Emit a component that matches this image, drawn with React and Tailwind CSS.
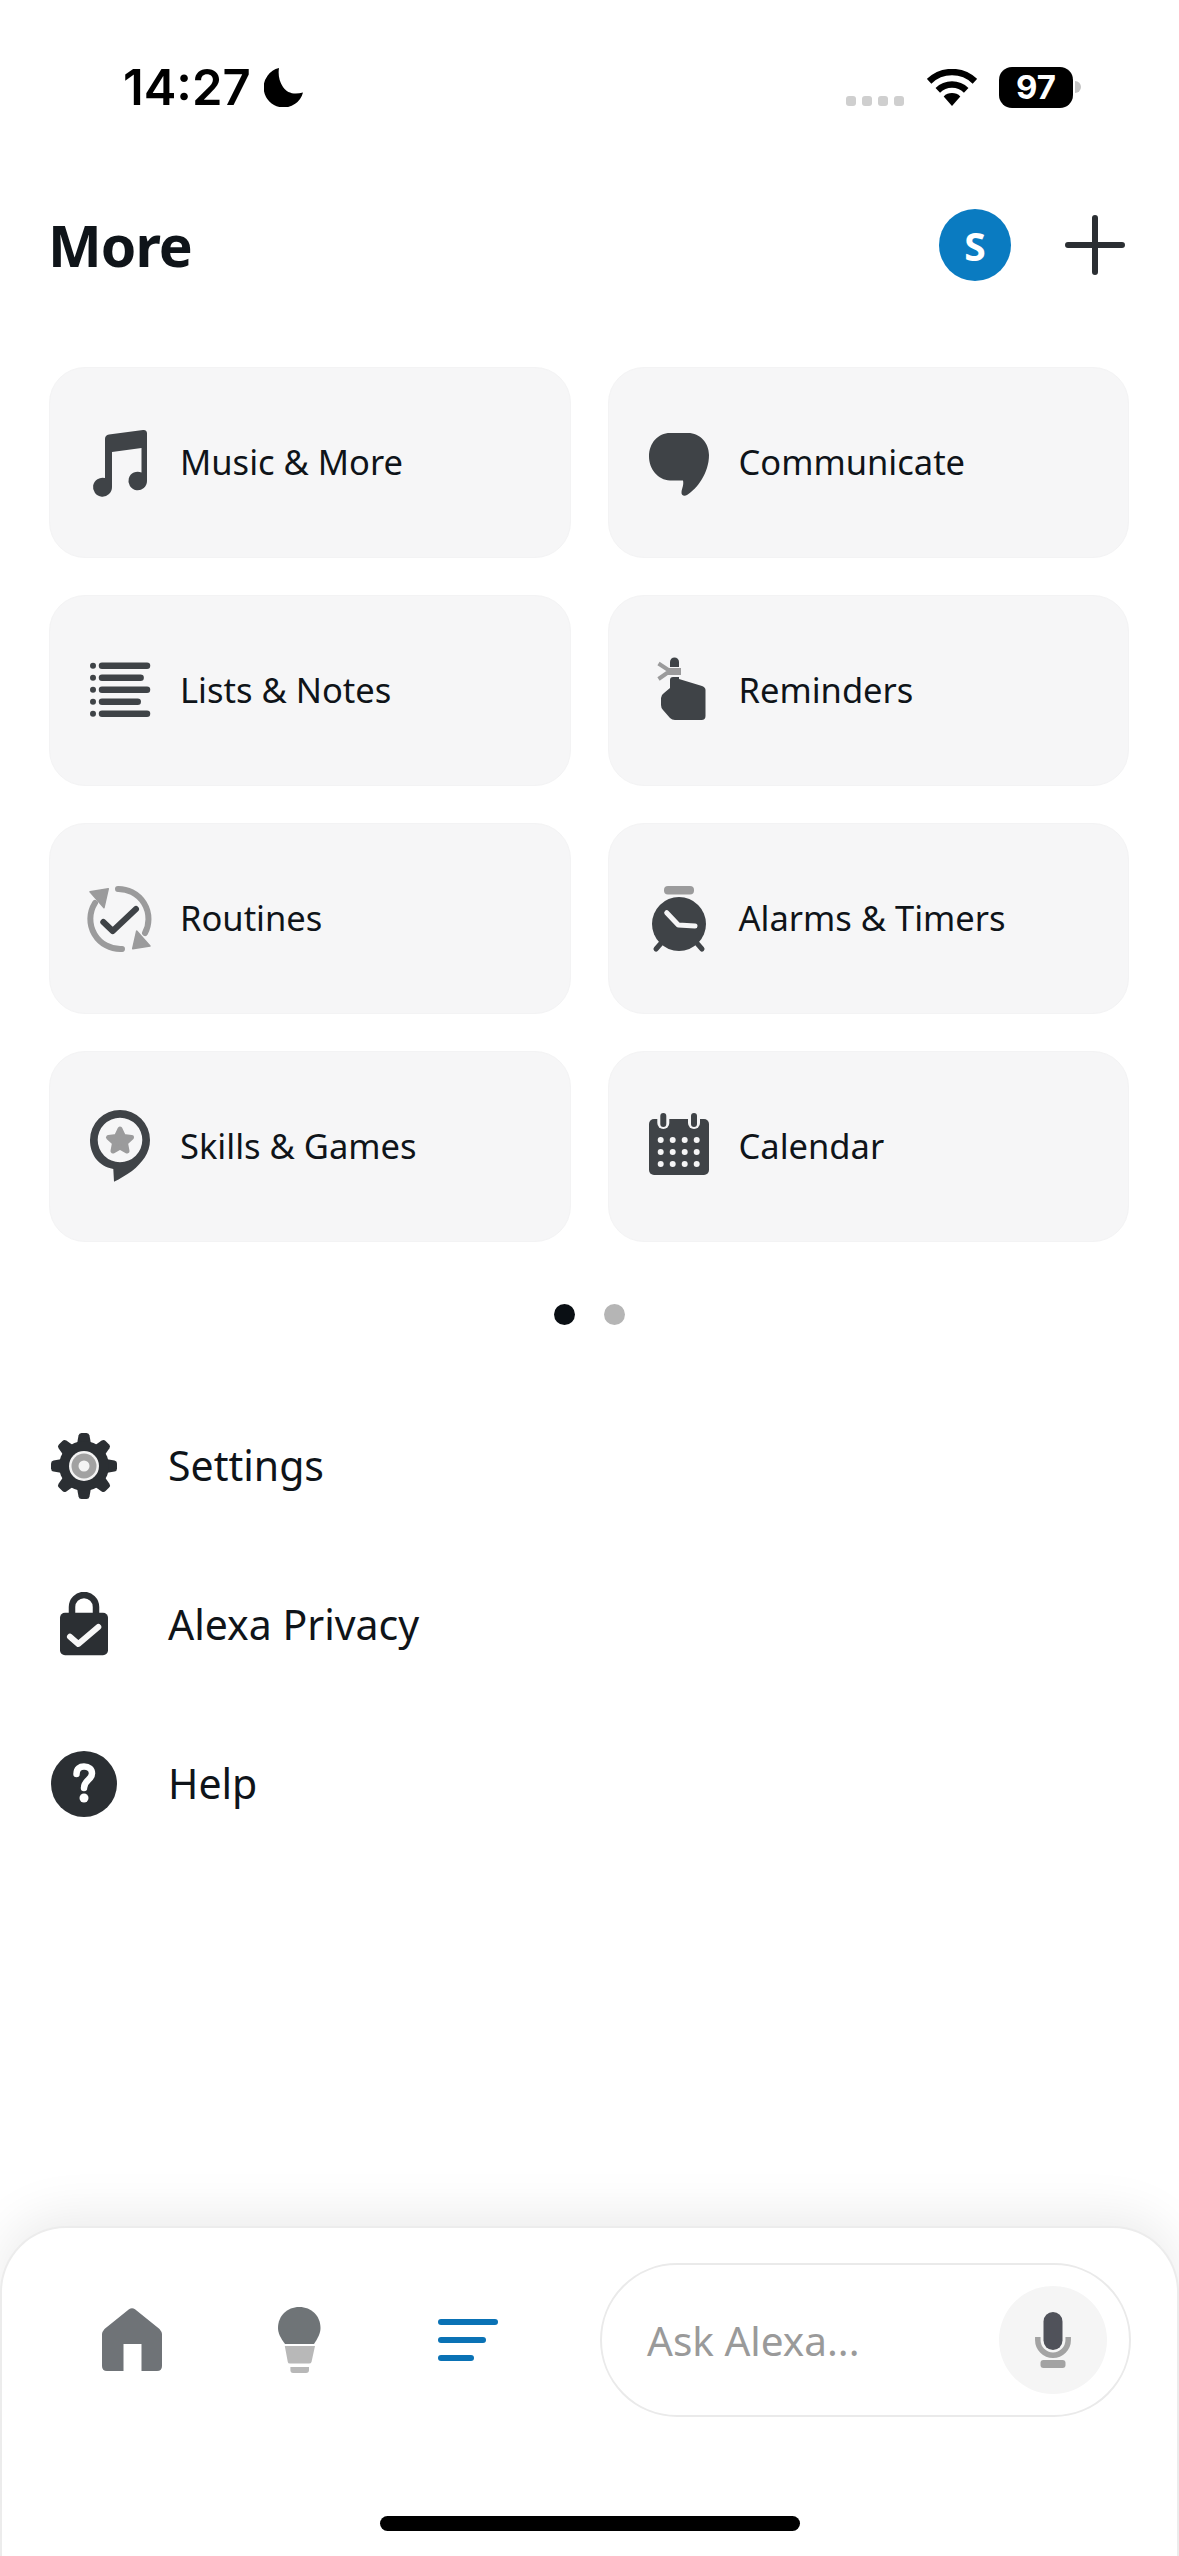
import React from "react";

const D = "#3f4347";
const G = "#9b9b9c";

const MusicIcon = () => (
  <svg width="72" height="72" viewBox="0 0 72 72" className="overflow-visible shrink-0">
    <path fill={D} d="M21 12 Q21 8 25 7.5 L59 3 Q63 2.6 63 6.5 V54 A9.3 9.3 0 1 1 57.5 45.5 V21 L28 25 V60 A9.5 9.5 0 1 1 21 51 Z" />
  </svg>
);
const ChatIcon = () => (
  <svg width="72" height="72" viewBox="0 0 72 72" className="overflow-visible shrink-0">
    <path fill={D} d="M27 6 H45 C57 6 66 16 66 28 C66 46 54 62 44 68 C41 70 38 68 38.5 65 C39 61 41 58 40 53.5 H27 C15 53 6 42 6 29.5 C6 16 15 6 27 6Z" />
  </svg>
);
const ListIcon = () => (
  <svg width="72" height="72" viewBox="0 0 72 72" className="overflow-visible shrink-0">
    {[[10.7, 66], [22.7, 59.6], [34.7, 66], [46.7, 56.7], [58.7, 66]].map(([y, x2]) => (
      <g key={y}>
        <circle cx="9" cy={y} r="3" fill={D} />
        <line x1="18" x2={x2 - 3} y1={y} y2={y} stroke={D} strokeWidth="6.5" strokeLinecap="round" />
      </g>
    ))}
  </svg>
);
const ReminderIcon = () => (
  <svg width="72" height="72" viewBox="0 0 72 72" className="overflow-visible shrink-0">
    <path fill={D} d="M27 7 A4.5 4.5 0 0 1 36 7 V12 H27 Z" />
    <path fill={D} d="M27 25 Q27 22 30 22 H36 V24 L59 31 Q62.5 32.5 62.5 35 V61 Q62.5 65 58.5 65 H32 Q29 65 27 63 L20 55 Q18 53 18 50 V43 Q18 40 21 38 L27 33 Z" />
    <path fill="none" stroke={G} strokeWidth="4" d="M15.5 8.5 L27 16 L15.5 24" />
    <rect x="25" y="13" width="13" height="7" fill={G} />
  </svg>
);
const RoutineIcon = () => (
  <svg width="72" height="72" viewBox="0 0 72 72" className="overflow-visible shrink-0">
    <path fill="none" stroke={G} strokeWidth="6" strokeLinecap="round" d="M34 6 A30 30 0 0 1 61 50" />
    <path fill="none" stroke={G} strokeWidth="6" strokeLinecap="round" d="M38 66 A30 30 0 0 1 11 20" />
    <path fill={G} stroke={G} strokeWidth="1.5" strokeLinejoin="round" d="M52.7 48 L48.7 65.7 L66 63 Z" />
    <path fill={G} stroke={G} strokeWidth="1.5" strokeLinejoin="round" d="M6 8.7 L24.3 5.7 L20 24.7 Z" />
    <path fill="none" stroke={D} strokeWidth="6" strokeLinecap="round" strokeLinejoin="round" d="M19.3 39 L28.7 48 L52 26" />
  </svg>
);
const AlarmIcon = () => (
  <svg width="72" height="72" viewBox="0 0 72 72" className="overflow-visible shrink-0">
    <rect x="21" y="3" width="30" height="8.5" rx="4" fill={G} />
    <line x1="20" y1="58" x2="13" y2="66" stroke={D} strokeWidth="5" strokeLinecap="round" />
    <line x1="52" y1="58" x2="59" y2="66" stroke={D} strokeWidth="5" strokeLinecap="round" />
    <circle cx="36" cy="41" r="27" fill={D} />
    <path fill="none" stroke="#f5f5f6" strokeWidth="5" strokeLinecap="round" strokeLinejoin="round" d="M23.7 29.7 L35.3 42 L52 43" />
  </svg>
);
const SkillsIcon = () => (
  <svg width="72" height="72" viewBox="0 0 72 72" className="overflow-visible shrink-0">
    <path fill={D} fillRule="evenodd" d="M36 -1 A30 30 0 0 1 66 29 C66 42 58 52 48 60 C42 64 36 68 30 70.7 L29.3 58 C14 55 6 43 6 29 A30 30 0 0 1 36 -1 Z M36 6.7 A22.3 22.3 0 1 0 36 51.3 A22.3 22.3 0 1 0 36 6.7 Z" />
    <path fill={G} stroke={G} strokeWidth="5" strokeLinejoin="round" d="M36 18 L39.5 25.5 L47.5 26.5 L41.5 32 L43 40 L36 36 L29 40 L30.5 32 L24.5 26.5 L32.5 25.5 Z" />
  </svg>
);
const CalendarIcon = () => (
  <svg width="72" height="72" viewBox="0 0 72 72" className="overflow-visible shrink-0">
    <rect x="6" y="8" width="60" height="56" rx="5" fill={D} />
    <rect x="14.3" y="-1" width="12" height="19" rx="6" fill="#f5f5f6" />
    <rect x="45" y="-1" width="12" height="19" rx="6" fill="#f5f5f6" />
    <rect x="17.3" y="2" width="6" height="14" rx="3" fill={D} />
    <rect x="48" y="2" width="6" height="14" rx="3" fill={D} />
    {[29, 41, 53].map((y) =>
      [17.7, 29.7, 41.7, 53.7].map((x) => <circle key={`${x}-${y}`} cx={x} cy={y} r="3" fill="#f5f5f6" />)
    )}
  </svg>
);

const GearIcon = () => (
  <svg width="66" height="66" viewBox="0 0 66 66" className="shrink-0">
    {[0, 45, 90, 135, 180, 225, 270, 315].map((a) => (
      <path key={a} transform={`rotate(${a} 33 33)`} fill="#2b2f33" d="M25.5 14 L27.5 2.5 Q28 0 30.5 0 H35.5 Q38 0 38.5 2.5 L40.5 14 Z" />
    ))}
    <circle cx="33" cy="33" r="25" fill="#2b2f33" />
    <circle cx="33" cy="33" r="15" fill="#f4f4f4" />
    <circle cx="33" cy="33" r="12.5" fill="#a2a2a2" />
    <circle cx="33" cy="33" r="5.5" fill="#f4f4f4" />
  </svg>
);
const LockIcon = () => (
  <svg width="66" height="66" viewBox="0 0 66 66" className="shrink-0">
    <path fill="none" stroke="#2b2f33" strokeWidth="6.5" d="M21 24 V15 A12 12 0 0 1 45 15 V24" />
    <rect x="9" y="20.7" width="48" height="42.5" rx="5" fill="#2b2f33" />
    <path fill="none" stroke="#f8f8f8" strokeWidth="6" strokeLinecap="round" strokeLinejoin="round" d="M19 44.7 L27.3 52 L47.3 35" />
  </svg>
);
const HelpIcon = () => (
  <svg width="66" height="66" viewBox="0 0 66 66" className="shrink-0">
    <circle cx="33" cy="33" r="33" fill="#2b2f33" />
    <path fill="none" stroke="#fff" strokeWidth="6.5" strokeLinecap="round" d="M25.5 23 C25.5 17.5 29 15.5 33 15.5 C38 15.5 41 18.5 41 22.5 C41 29 33 29 33 37" />
    <circle cx="33" cy="47" r="4.5" fill="#fff" />
  </svg>
);

const cards = [
  ["Music & More", MusicIcon],
  ["Communicate", ChatIcon],
  ["Lists & Notes", ListIcon],
  ["Reminders", ReminderIcon],
  ["Routines", RoutineIcon],
  ["Alarms & Timers", AlarmIcon],
  ["Skills & Games", SkillsIcon],
  ["Calendar", CalendarIcon],
];
const rows = [
  ["Settings", GearIcon],
  ["Alexa Privacy", LockIcon],
  ["Help", HelpIcon],
];

export default function App() {
  return (
    <div className="w-[1179px] h-[2556px] bg-white flex flex-col overflow-hidden font-['Noto_Sans',sans-serif] text-[#0f1419]">
      {/* status bar */}
      <div className="mt-[66px] h-[42px] flex items-center pl-[123px]">
        <span className="font-['Inter',sans-serif] font-semibold text-[49px] leading-none text-black">14:27</span>
        <svg width="40" height="40" viewBox="0 0 40 40" className="ml-[13px]">
          <path fill="#000" d="M15 1 A20 20 0 1 0 39 25.5 C30 28 23 26 19 20 C15 14 14 7 15 1Z" />
        </svg>
        <div className="ml-auto flex items-center">
          <div className="flex gap-[6px] self-end mb-[2px] mr-[23px]">
            <span className="w-[10px] h-[10px] rounded-[3px] bg-[#cfcfcf]" />
            <span className="w-[10px] h-[10px] rounded-[3px] bg-[#cfcfcf]" />
            <span className="w-[10px] h-[10px] rounded-[3px] bg-[#cfcfcf]" />
            <span className="w-[10px] h-[10px] rounded-[3px] bg-[#cfcfcf]" />
          </div>
          <svg width="50" height="37" viewBox="0 0 50 37" className="mr-[22px]">
            <path fill="none" stroke="#000" strokeWidth="6.5" d="M2.1 12.3 A33 33 0 0 1 47.9 12.3" />
            <path fill="none" stroke="#000" strokeWidth="6.5" d="M10.8 21.3 A20.5 20.5 0 0 1 39.2 21.3" />
            <path fill="#000" d="M25 37 L16.7 27.4 A12 12 0 0 1 33.3 27.4 Z" />
          </svg>
          <div className="w-[74px] h-[41px] rounded-[13px] bg-black text-white font-['Inter',sans-serif] font-bold text-[33px] leading-none flex items-center justify-center">97</div>
          <span className="ml-[2px] mr-[98px] w-[6px] h-[12px] rounded-r-[6px] bg-[#c4c4c4]" />
        </div>
      </div>

      {/* header */}
      <div className="mt-[101px] h-[72px] flex items-center pl-[48px] pr-[54px]">
        <h1 className="font-bold text-[57px] leading-none tracking-[-1px]">More</h1>
        <div className="ml-auto w-[72px] h-[72px] rounded-full bg-[#0a7bc1] text-white font-bold text-[39px] leading-none flex items-center justify-center">S</div>
        <svg width="60" height="60" viewBox="0 0 60 60" className="ml-[54px]">
          <path stroke="#2b2f33" strokeWidth="6" strokeLinecap="round" d="M30 3 V57 M3 30 H57" />
        </svg>
      </div>

      {/* cards */}
      <div className="mt-[86px] pl-[49px] pr-[50px] grid grid-cols-2 gap-[37px] auto-rows-[191px]">
        {cards.map(([label, Icon]) => (
          <div key={label} className="rounded-[36px] bg-[#f6f6f7] border border-[#f3f3f4] flex items-center pl-[34px] gap-[24px]">
            <Icon />
            <span className="text-[34.5px] leading-none">{label}</span>
          </div>
        ))}
      </div>

      {/* pagination */}
      <div className="mt-[62px] flex justify-center gap-[29px]">
        <span className="w-[21px] h-[21px] rounded-full bg-[#0a0f14]" />
        <span className="w-[21px] h-[21px] rounded-full bg-[#b5b5b5]" />
      </div>

      {/* rows */}
      <div className="mt-[61px] flex flex-col pl-[51px]">
        {rows.map(([label, Icon]) => (
          <div key={label} className="h-[159px] flex items-center gap-[51px]">
            <Icon />
            <span className="text-[41px] leading-none">{label}</span>
          </div>
        ))}
      </div>

      {/* bottom bar */}
      <div className="mt-auto h-[330px] rounded-t-[66px] bg-white border-t-2 border-x-2 border-[#ececec] shadow-[0_-12px_50px_rgba(0,0,0,0.08)] flex flex-col pt-[35px]">
        <div className="flex items-center pl-[100px]">
          <svg width="60" height="64" viewBox="0 0 60 64" className="overflow-visible">
            <path fill="#6f7377" d="M27 1.3 Q30 -0.6 33 1.3 L57.5 21 Q60 24 60 26 V58 Q60 63 55 63 H39.5 V36 H21.5 V63 H5 Q0 63 0 58 V26 Q0 24 2.5 21 Z" />
          </svg>
          <svg width="43" height="66" viewBox="0 0 43 66" className="ml-[116px]">
            <path fill="#6f7477" d="M7 37 C2.5 31 0 26 0 21 C0 9 9 0 21.3 0 C33.5 0 42.5 9 42.5 21 C42.5 26 40 31 36 37 Z" />
            <path fill="#b8b8b8" d="M6.8 39 H37 L33.5 55 Q33 56.6 31 56.6 H12 Q10 56.6 9.8 55 Z" />
            <path fill="#b8b8b8" d="M12.4 60 H31 V63 Q31 66 28 66 H15 Q12.4 66 12.4 63 Z" />
          </svg>
          <div className="ml-[117px] w-[60px] flex flex-col gap-[12px]">
            <span className="block h-[6px] w-[60px] rounded-full bg-[#0a72b5]" />
            <span className="block h-[6px] w-[48px] rounded-full bg-[#0a72b5]" />
            <span className="block h-[6px] w-[36px] rounded-full bg-[#0a72b5]" />
          </div>
          <div className="ml-[102px] w-[531px] h-[154px] rounded-full border-2 border-[#eaeaea] flex items-center pl-[45px] pr-[22px]">
            <span className="text-[40.5px] leading-none text-[#9a9a9a] pt-[2px]">Ask Alexa...</span>
            <div className="ml-auto w-[108px] h-[108px] rounded-full bg-[#f5f5f5] flex items-center justify-center">
              <svg width="36" height="56" viewBox="0 0 36 56">
                <path fill="none" stroke="#a3a3a3" strokeWidth="5.5" d="M2.8 25 V28 A15.2 15.2 0 0 0 33.2 28 V25" />
                <rect x="8.5" y="0" width="19" height="38" rx="9.5" fill="#50525a" />
                <rect x="5.5" y="48" width="25" height="8" rx="3" fill="#a3a3a3" />
              </svg>
            </div>
          </div>
        </div>
        <div className="mt-[99px] self-center w-[420px] h-[15px] rounded-full bg-black" />
      </div>
    </div>
  );
}
